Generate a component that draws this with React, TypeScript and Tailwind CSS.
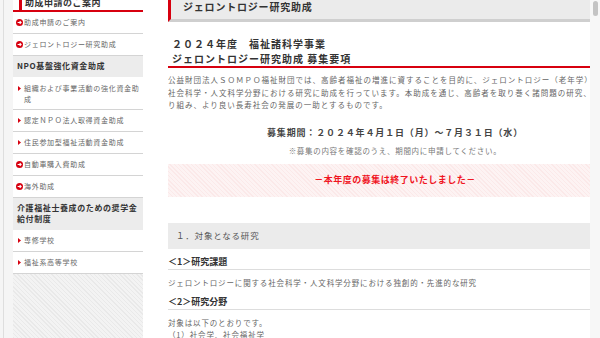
import React from "react";

function CircleArrow() {
  return (
    <svg width="7" height="7" viewBox="0 0 7 7" className="shrink-0">
      <circle cx="3.5" cy="3.5" r="3.5" fill="#d7000f" />
      <path d="M1.6 3.5H5.1M3.7 2.1L5.1 3.5L3.7 4.9" stroke="#fff" strokeWidth="1.1" fill="none" />
    </svg>
  );
}

function Tri() {
  return (
    <svg width="3" height="5" viewBox="0 0 3 5" className="shrink-0">
      <polygon points="0,0 3,2.5 0,5" fill="#d7000f" />
    </svg>
  );
}

function Item({ icon, lines }: { icon: "c" | "t"; lines: string[] }) {
  const tall = lines.length > 1;
  return (
    <div
      className={
        "flex border-b border-[#d4d4d4] " +
        (tall ? "h-[33px] items-start pt-[6px]" : "h-[22px] items-center")
      }
    >
      <div className={"flex justify-center " + (icon === "c" ? "w-[11px] pl-[2px]" : "w-[11px] pl-[1px]") + (tall ? " mt-[3px]" : "")}>
        {icon === "c" ? <CircleArrow /> : <Tri />}
      </div>
      <div className="text-[7px] leading-[10.5px] tracking-[0.7px] text-[#666]">
        {lines.map((l, i) => (
          <div key={i} className="whitespace-nowrap">
            {l}
          </div>
        ))}
      </div>
    </div>
  );
}

function GroupHeader({ lines }: { lines: string[] }) {
  return (
    <div
      className={
        "bg-[#ececec] pl-[4px] flex flex-col justify-center text-[8px] leading-[10.7px] tracking-[0.6px] font-bold text-[#333] " +
        (lines.length > 1 ? "h-[32px]" : "h-[21px]")
      }
    >
      {lines.map((l, i) => (
        <div key={i} className="whitespace-nowrap">
          {l}
        </div>
      ))}
    </div>
  );
}

export default function App() {
  return (
    <div className="w-[600px] h-[338px] overflow-hidden flex bg-white font-['Noto_Sans_CJK_JP','Noto_Sans',sans-serif]">
      {/* left gutter */}
      <div className="w-[13px] shrink-0 bg-[#f5f5f5] flex">
        <div className="w-[3px]" />
        <div className="w-[1px] bg-[#dedede]" />
      </div>

      {/* sidebar */}
      <aside className="w-[130px] shrink-0 flex flex-col">
        <div className="h-[10px] flex items-start overflow-hidden pl-[6px] bg-white">
          <div className="w-[3px] h-[10px] bg-[#d7000f]" />
          <span className="ml-[3px] -mt-[3px] text-[9px] leading-[11px] tracking-[0.5px] font-bold text-[#333] whitespace-nowrap">
            助成申請のご案内
          </span>
        </div>
        <div className="h-[2px] bg-[#d7000f]" />
        <Item icon="c" lines={["助成申請のご案内"]} />
        <Item icon="c" lines={["ジェロントロジー研究助成"]} />
        <GroupHeader lines={["NPO基盤強化資金助成"]} />
        <Item icon="t" lines={["組織および事業活動の強化資金助", "成"]} />
        <Item icon="t" lines={["認定ＮＰＯ法人取得資金助成"]} />
        <Item icon="t" lines={["住民参加型福祉活動資金助成"]} />
        <Item icon="c" lines={["自動車購入費助成"]} />
        <Item icon="c" lines={["海外助成"]} />
        <GroupHeader lines={["介護福祉士養成のための奨学金", "給付制度"]} />
        <Item icon="t" lines={["専修学校"]} />
        <Item icon="t" lines={["福祉系高等学校"]} />
        <div className="flex-1 bg-[repeating-linear-gradient(45deg,#e9e9e9_0px,#e9e9e9_1px,#f3f3f3_1px,#f3f3f3_3px)]" />
      </aside>

      <div className="w-[25px] shrink-0" />

      {/* main */}
      <main className="w-[422px] shrink-0 overflow-hidden">
        <div className="w-[454px]">
          <div className="h-[22px] bg-[#ebebeb] border-l-[3px] border-[#d7000f] border-b-[3px] border-b-[#cfcfcf] pl-[12px] flex items-start">
            <span className="text-[10px] leading-[14px] tracking-[0.8px] font-bold text-[#333] whitespace-nowrap">
              ジェロントロジー研究助成
            </span>
          </div>

          <div className="mt-[14px] border-b-2 border-[#d7000f] pl-[4px] text-[10px] leading-[15px] tracking-[1px] font-bold text-[#333]">
            <div className="whitespace-nowrap">２０２４年度　福祉諸科学事業</div>
            <div className="whitespace-nowrap">ジェロントロジー研究助成 募集要項</div>
          </div>

          <div className="mt-[6px] text-[7.5px] leading-[12.5px] tracking-[1px] text-[#666]">
            <div className="whitespace-nowrap">
              公益財団法人ＳＯＭＰＯ福祉財団では、高齢者福祉の増進に資することを目的に、ジェロントロジー（老年学）に
            </div>
            <div className="whitespace-nowrap">
              社会科学・人文科学分野における研究に助成を行っています。本助成を通じ、高齢者を取り巻く諸問題の研究、取
            </div>
            <div className="whitespace-nowrap">り組み、より良い長寿社会の発展の一助とするものです。</div>
          </div>

          <div className="mt-[14px] text-center text-[9px] leading-[13px] tracking-[0.85px] font-bold text-[#444]">
            募集期間：２０２４年４月１日（月）～７月３１日（水）
          </div>
          <div className="mt-[6px] text-center text-[7.5px] leading-[12px] tracking-[0.7px] text-[#777]">
            ※募集の内容を確認のうえ、期間内に申請してください。
          </div>

          <div className="mt-[7px] h-[33px] flex items-center justify-center bg-[repeating-linear-gradient(45deg,#fbe9e9_0px,#fbe9e9_1px,#fdf3f3_1px,#fdf3f3_3px)]">
            <span className="text-[9px] leading-[12px] tracking-[0.5px] font-bold text-[#f0141e]">
              －本年度の募集は終了いたしました－
            </span>
          </div>

          <div className="mt-[26px] h-[26px] bg-[#ebebeb] pl-[8px] flex items-center">
            <span className="text-[8.5px] tracking-[0.8px] text-[#555]">１．対象となる研究</span>
          </div>

          <div className="mt-[6px] pb-[1px] border-b border-[#dddddd] text-[9px] leading-[13px] font-bold text-[#333]">
            ＜1＞研究課題
          </div>
          <div className="mt-[7px] text-[7.5px] leading-[12px] tracking-[0.85px] text-[#666]">
            ジェロントロジーに関する社会科学・人文科学分野における独創的・先進的な研究
          </div>
          <div className="mt-[6px] pb-[1px] border-b border-[#dddddd] text-[9px] leading-[13px] font-bold text-[#333]">
            ＜2＞研究分野
          </div>
          <div className="mt-[7px] text-[7.5px] leading-[12px] tracking-[0.85px] text-[#666]">
            <div>対象は以下のとおりです。</div>
            <div>（1）社会学、社会福祉学</div>
          </div>
        </div>
      </main>

      {/* scrollbar */}
      <div className="w-[10px] shrink-0 bg-[#f7f7f7] flex justify-center pt-[1px]">
        <div className="w-[5px] h-[15px] rounded-full bg-[#c4c4c4]" />
      </div>
    </div>
  );
}
